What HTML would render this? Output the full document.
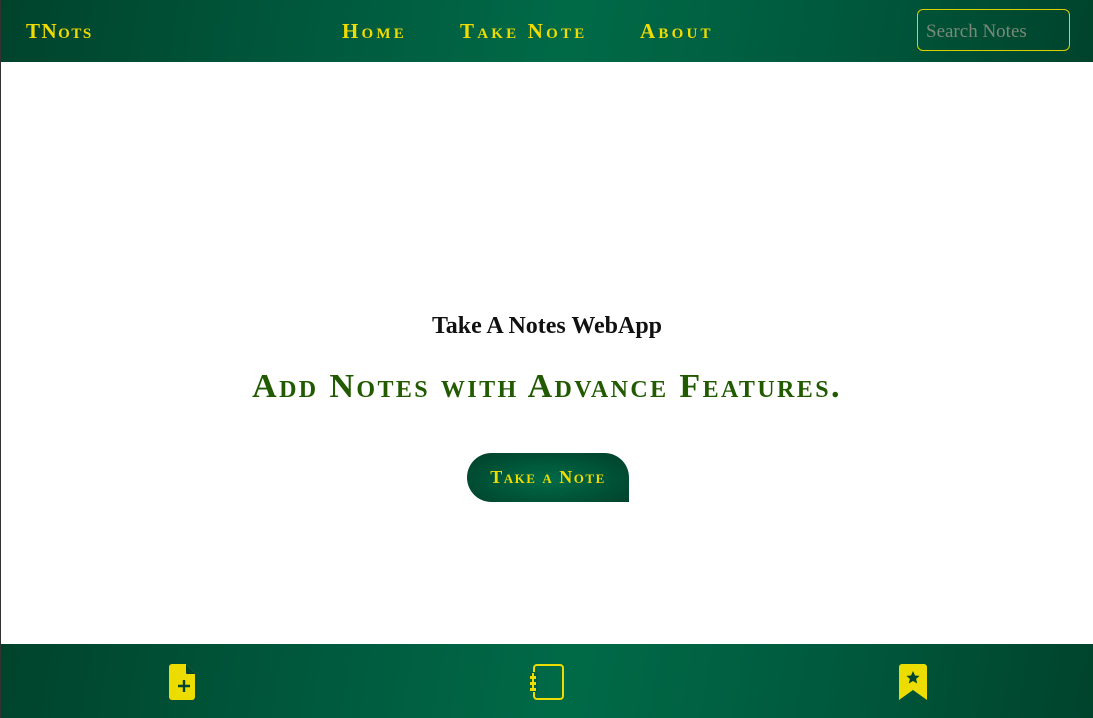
<!DOCTYPE html>
<html><head><meta charset="utf-8"><style>
*{margin:0;padding:0;box-sizing:border-box}
html,body{width:1093px;height:718px;overflow:hidden;background:#fff}
body{border-left:1px solid #333;position:relative;font-family:"Liberation Serif",serif}
.g{background:linear-gradient(100deg,#00432c 0%,#005a3d 30%,#006a47 52%,#005a3d 75%,#00432c 100%)}
nav{position:absolute;left:0;top:0;width:1092px;height:62px}
.sc{font-variant:small-caps;font-weight:bold;color:#f0dc00;letter-spacing:1.5px}
.logo{position:absolute;left:25px;top:19px;font-size:21px}
.links{position:absolute;top:19px;font-size:21px;letter-spacing:3.2px}
.search{position:absolute;left:916px;top:9px;width:153px;height:42px;border:1px solid #d8d000;border-radius:6px;color:#7a8a7a;font-size:19px;padding:11px 8px}
.t1{position:absolute;top:313px;width:100%;text-align:center;font-size:24px;font-weight:bold;color:#111}
.t2{position:absolute;top:368px;width:100%;text-align:center;font-size:34px;font-weight:bold;font-variant:small-caps;color:#215a00;letter-spacing:2.4px}
.btn{position:absolute;left:466px;top:453px;width:162px;height:49px;border-radius:25px 25px 0 25px;background:radial-gradient(ellipse at 50% 55%,#006a47,#00432c 90%);text-align:center;line-height:49px;font-size:18px}
footer{position:absolute;left:0;top:644px;width:1092px;height:74px}
</style></head><body>
<nav class="g">
<div class="logo sc">TNots</div>
<div class="links sc" style="left:341px">Home</div>
<div class="links sc" style="left:459px">Take Note</div>
<div class="links sc" style="left:639px">About</div>
<div class="search">Search Notes</div>
</nav>
<div class="t1">Take A Notes WebApp</div>
<div class="t2">Add Notes with Advance Features.</div>
<div class="btn sc">Take a Note</div>
<footer class="g">
<svg style="position:absolute;left:168px;top:20px" width="30" height="36" viewBox="0 0 30 36"><path d="M3 0h14l9 9v24a3 3 0 0 1-3 3H3a3 3 0 0 1-3-3V3a3 3 0 0 1 3-3z" fill="#ecdc00"/><path d="M17 0l9 9v1h-8a1 1 0 0 1-1-1z" fill="#00452f"/><path d="M15 16v12M9 22h12" stroke="#00452f" stroke-width="2.4"/></svg>
<svg style="position:absolute;left:529px;top:20px" width="36" height="36" viewBox="0 0 36 36"><rect x="4" y="1" width="29" height="34" rx="3" fill="none" stroke="#ecdc00" stroke-width="2"/><rect x="0" y="8" width="8" height="20" fill="#005e40"/><g fill="#ecdc00"><rect x="0" y="12" width="6" height="3"/><rect x="2" y="9" width="2" height="4"/><rect x="0" y="18" width="6" height="3"/><rect x="2" y="15" width="2" height="4"/><rect x="0" y="24" width="6" height="3"/><rect x="2" y="21" width="2" height="4"/></g></svg>
<svg style="position:absolute;left:898px;top:20px" width="28" height="36" viewBox="0 0 28 36"><path d="M3 0h22a3 3 0 0 1 3 3v33l-14-10L0 36V3a3 3 0 0 1 3-3z" fill="#ecdc00"/><path d="M14 7l2 4.5 4.6.4-3.5 3 1.1 4.6L14 17l-4.2 2.5 1.1-4.6-3.5-3 4.6-.4z" fill="#00452f"/></svg>
</footer>
</body></html>
